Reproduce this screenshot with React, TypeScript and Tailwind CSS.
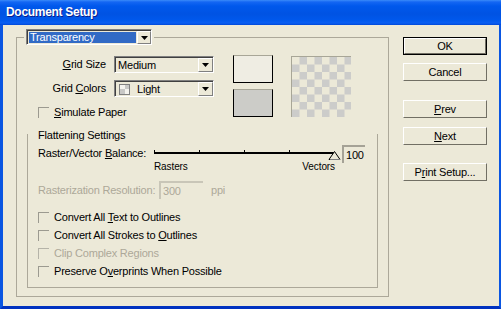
import React from "react";

function U({ children }: { children: React.ReactNode }) {
  return <span className="underline underline-offset-[1px] decoration-[1px]">{children}</span>;
}

function Arrow() {
  return (
    <svg width="7" height="4" className="block">
      <path d="M0 0 H7 L3.5 4 Z" fill="#000" />
    </svg>
  );
}

function Select({ children, w }: { children: React.ReactNode; w: string }) {
  return (
    <div className={`flex h-[17px] ${w} border-t border-l border-[#808080] border-r border-b border-r-white border-b-white`}>
      <div className="flex flex-1 border-t border-l border-[#404040]">
        <div className="flex flex-1 items-center pl-[2px] text-black">{children}</div>
        <div className="flex w-[15px] items-center justify-center border-t border-l border-r border-b border-t-white border-l-white border-r-[#808080] border-b-[#808080]">
          <Arrow />
        </div>
      </div>
    </div>
  );
}

function Check({ children, disabled }: { children: React.ReactNode; disabled?: boolean }) {
  return (
    <div className="flex h-[11px] items-center">
      <div className={`h-[11px] w-[11px] shrink-0 border-t border-l ${disabled ? "border-[#B5B3A8]" : "border-[#9C9A90]"}`} />
      <span className={`ml-[5px] whitespace-nowrap leading-[11px] ${disabled ? "text-[#ACA899]" : "text-black"}`}>{children}</span>
    </div>
  );
}

function Btn({ children, def, mt }: { children: React.ReactNode; def?: boolean; mt: string }) {
  return (
    <div className={`${mt} h-[18px] w-[84px] ${def ? "border border-black" : ""}`}>
      <div className="flex h-full w-full items-center justify-center border-t border-l border-r border-b border-t-white border-l-white border-r-[#716F64] border-b-[#716F64]">
        <span className="text-black">{children}</span>
      </div>
    </div>
  );
}

function Checker() {
  const cells = [];
  for (let r = 0; r < 8; r++) {
    for (let c = 0; c < 8; c++) {
      if ((r + c) % 2 === 1) cells.push(<rect key={`${r}-${c}`} x={1 + c * 7.5} y={1 + r * 7.5} width="7.5" height="7.5" fill="#CCCCCA" />);
    }
  }
  return (
    <svg width="60" height="61" className="block">
      <rect x="0" y="0" width="60" height="61" fill="#ECE9D8" />
      {cells}
      <rect x="0" y="0" width="60" height="1" fill="#A8A697" />
      <rect x="0" y="0" width="1" height="61" fill="#A8A697" />
    </svg>
  );
}

export default function App() {
  return (
    <div className="flex h-[309px] w-[501px] flex-col overflow-hidden font-[Liberation_Sans,Arial,sans-serif] text-[11px] tracking-[-0.2px] leading-[13px]">
      {/* title bar */}
      <div className="flex h-[25px] shrink-0 items-center bg-[linear-gradient(to_bottom,#3A8BF9_0px,#1466F3_2px,#0058EC_6px,#0053E3_14px,#0058EC_20px,#0A5FF2_23px,#0048D8_25px)] pl-[6px]">
        <span className="text-[12px] font-bold tracking-[-0.3px] text-white [text-shadow:1px_1px_0_#0A1E8C]">Document Setup</span>
      </div>
      {/* body */}
      <div className="flex flex-1 border-l-[3px] border-r-[2px] border-b-[3px] border-l-[#0A56E2] border-r-[#0A56E2] border-b-[#0032C0] bg-[#ECE9D8]">
        {/* outer group */}
        <div className="relative ml-[13px] mt-[12px] flex h-[260px] w-[373px] flex-col border border-[#ACA899]">
          {/* legend dropdown */}
          <div className="absolute left-[7px] top-[-9px] bg-[#ECE9D8] px-[2px]">
            <div className="flex h-[16px] w-[126px] border-t border-l border-[#808080] border-r border-b border-r-white border-b-white">
              <div className="flex flex-1 border-t border-l border-[#404040]">
                <div className="flex flex-1 items-center bg-[#ECE9D8] p-[1px]">
                  <div className="flex h-full w-full items-center bg-[#316AC5] pl-[1px] text-white">Transparency</div>
                </div>
                <div className="flex w-[14px] items-center justify-center border-t border-l border-r border-b border-t-white border-l-white border-r-[#808080] border-b-[#808080]">
                  <Arrow />
                </div>
              </div>
            </div>
          </div>

          {/* top section */}
          <div className="mt-[18px] flex items-start">
            <div className="flex flex-col">
              <div className="flex items-center">
                <div className="w-[89px] text-right text-black">
                  <U>G</U>rid Size
                </div>
                <div className="ml-[8px]">
                  <Select w="w-[100px]">Medium</Select>
                </div>
              </div>
              <div className="mt-[7px] flex items-center">
                <div className="w-[89px] text-right text-black">
                  Grid <U>C</U>olors
                </div>
                <div className="ml-[8px]">
                  <Select w="w-[100px]">
                    <div className="flex items-center">
                      <div className="ml-[1px] flex h-[11px] w-[11px] flex-wrap border border-[#808080]">
                        <div className="h-[4.5px] w-[4.5px] bg-[#F4F3EE]" />
                        <div className="h-[4.5px] w-[4.5px] bg-[#C8C8C6]" />
                        <div className="h-[4.5px] w-[4.5px] bg-[#C8C8C6]" />
                        <div className="h-[4.5px] w-[4.5px] bg-[#F4F3EE]" />
                      </div>
                      <span className="ml-[7px]">Light</span>
                    </div>
                  </Select>
                </div>
              </div>
              <div className="ml-[21px] mt-[10px]">
                <Check>
                  <U>S</U>imulate Paper
                </Check>
              </div>
            </div>
            {/* previews */}
            <div className="-mt-[1px] ml-[19px] flex flex-col">
              <div className="h-[28px] w-[40px] border-t border-t-[#A8A697] border-l border-r border-b border-l-black border-r-black border-b-black bg-[#EFEDE3]" />
              <div className="mt-[6px] h-[28px] w-[40px] border-t border-t-[#A8A697] border-l border-r border-b border-l-black border-r-black border-b-black bg-[#CCCCC8]" />
            </div>
            <div className="ml-[18px] mt-0">
              <Checker />
            </div>
          </div>

          {/* flattening group */}
          <div className="mx-[10px] mt-[16px] flex flex-col border-l border-r border-b border-[#ACA899] pb-[10px]">
            <div className="-mt-[5px] pl-[10px] text-black">Flattening Settings</div>
            <div className="mt-[3px] flex items-start">
              <div className="mt-[2px] w-[126px] whitespace-nowrap pl-[10px] text-black">
                Raster/Vector <U>B</U>alance:
              </div>
              <div className="flex w-[188px] flex-col">
                <svg width="188" height="16" className="block">
                  <rect x="0" y="7" width="180" height="2" fill="#000" />
                  <rect x="0" y="5" width="1" height="2" fill="#000" />
                  <rect x="45" y="5" width="1" height="2" fill="#000" />
                  <rect x="90" y="5" width="1" height="2" fill="#000" />
                  <rect x="135" y="5" width="1" height="2" fill="#000" />
                  <path d="M180.5 6.5 L186 14.5 L175 14.5 Z" fill="#ECE9D8" stroke="#000" strokeWidth="1" />
                  <rect x="176" y="14" width="10" height="1" fill="#808080" />
                </svg>
                <div className="flex w-[181px] justify-between text-[10px] leading-[11px] tracking-[-0.1px] text-black">
                  <span>Rasters</span>
                  <span>Vectors</span>
                </div>
              </div>
              <div className="flex h-[18px] w-[23px] items-center border-t-[2px] border-l-[2px] border-[#A5A296] pl-[2px] text-black">
                100
              </div>
            </div>
            <div className="mt-[9px] flex items-center text-[#ACA899]">
              <div className="w-[131px] whitespace-nowrap pl-[10px]">Rasterization Resolution:</div>
              <div className="flex h-[18px] w-[44px] items-center border-t-[2px] border-l-[2px] border-[#C9C6B8] pl-[2px]">
                300
              </div>
              <span className="ml-[8px]">ppi</span>
            </div>
            <div className="ml-[10px] mt-[13px] flex flex-col gap-[7px]">
              <Check>
                Convert All <U>T</U>ext to Outlines
              </Check>
              <Check>
                Convert All Strokes to <U>O</U>utlines
              </Check>
              <Check disabled>
                Clip Complex Regions
              </Check>
              <Check>
                Preserve O<U>v</U>erprints When Possible
              </Check>
            </div>
          </div>
        </div>

        {/* buttons */}
        <div className="ml-[14px] flex flex-col pt-[12px]">
          <Btn def mt="mt-0">OK</Btn>
          <Btn mt="mt-[8px]">Cancel</Btn>
          <Btn mt="mt-[19px]">
            <U>P</U>rev
          </Btn>
          <Btn mt="mt-[9px]">
            <U>N</U>ext
          </Btn>
          <Btn mt="mt-[18px]">
            P<U>r</U>int Setup...
          </Btn>
        </div>
      </div>
    </div>
  );
}
